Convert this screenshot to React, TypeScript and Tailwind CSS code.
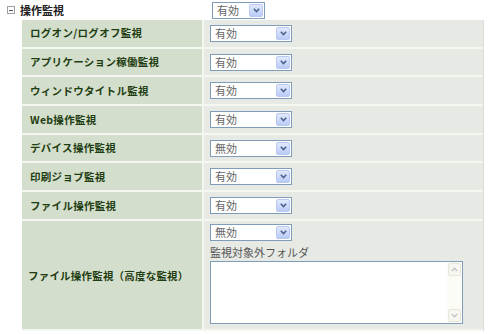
import React from "react";

const ROWS: { label: string; value: string }[] = [
  { label: "ログオン/ログオフ監視", value: "有効" },
  { label: "アプリケーション稼働監視", value: "有効" },
  { label: "ウィンドウタイトル監視", value: "有効" },
  { label: "Web操作監視", value: "有効" },
  { label: "デバイス操作監視", value: "無効" },
  { label: "印刷ジョブ監視", value: "有効" },
  { label: "ファイル操作監視", value: "有効" },
];

function Chevron() {
  return (
    <svg width="7" height="5" viewBox="0 0 7 5">
      <path d="M0.8 0.8 L3.5 3.6 L6.2 0.8" fill="none" stroke="#4a5f8c" strokeWidth="1.5" />
    </svg>
  );
}

function FakeSelect({ value, width }: { value: string; width: string }) {
  return (
    <div
      className={`flex items-center justify-between h-[17px] ${width} border border-[#7f9db9] bg-white pl-[4px] pr-[1px]`}
    >
      <span className="text-[11px] leading-none text-[#666]">{value}</span>
      <span className="flex items-center justify-center w-[14px] h-[13px] rounded-[2px] border border-[#b9c9ef] bg-gradient-to-b from-[#e1e9fd] to-[#b9cbf7]">
        <Chevron />
      </span>
    </div>
  );
}

function ScrollArrow({ up }: { up?: boolean }) {
  return (
    <span className="flex items-center justify-center w-[13px] h-[13px] rounded-[2px] border border-[#e6e6dc] bg-[#f7f7f0]">
      <svg width="7" height="5" viewBox="0 0 7 5">
        <path
          d={up ? "M0.8 4 L3.5 1.2 L6.2 4" : "M0.8 1 L3.5 3.8 L6.2 1"}
          fill="none"
          stroke="#c0c4c8"
          strokeWidth="1.3"
        />
      </svg>
    </span>
  );
}

export default function App() {
  return (
    <div className="w-[490px] h-[334px] overflow-hidden bg-white font-['Noto_Sans_CJK_JP','Noto_Sans',sans-serif]">
      {/* section header */}
      <div className="flex items-center h-[20px]">
        <span className="ml-[7px] flex items-center justify-center w-[8px] h-[8px] border border-[#9aa0a6] bg-white">
          <span className="block w-[4px] h-px bg-[#555]" />
        </span>
        <span className="ml-[5px] w-[192px] text-[11px] font-bold text-[#222] leading-none">操作監視</span>
        <FakeSelect value="有効" width="w-[53px]" />
      </div>

      {/* settings table */}
      <div className="ml-[22px] w-[462px] flex flex-col border-r border-[#dadcd8]">
        {ROWS.map((r) => (
          <div key={r.label} className="flex h-[28.7px] border-b-2 border-[#f3f7ef]">
            <div className="w-[180px] flex items-center pl-[8px] bg-[#d3dfcc] text-[10.5px] tracking-[0.3px] font-bold text-[#1f3d12]">
              {r.label}
            </div>
            <div className="w-[2px] bg-[#f3f7ef]" />
            <div className="flex-1 flex items-center pl-[6px] bg-[#e7eae4]">
              <FakeSelect value={r.value} width="w-[82px]" />
            </div>
          </div>
        ))}
        <div className="flex h-[110px] border-b-2 border-[#f3f7ef]">
          <div className="w-[180px] flex items-center pl-[6px] pt-[2px] bg-[#d3dfcc] text-[10.5px] tracking-[0.2px] font-bold text-[#1f3d12]">
            ファイル操作監視（高度な監視）
          </div>
          <div className="w-[2px] bg-[#f3f7ef]" />
          <div className="flex-1 flex flex-col pl-[6px] pt-[3px] bg-[#e7eae4]">
            <FakeSelect value="無効" width="w-[82px]" />
            <span className="mt-[6px] text-[11px] leading-none text-[#555]">監視対象外フォルダ</span>
            <div className="mt-[3px] w-[253px] h-[63px] flex justify-end border border-[#7f9db9] bg-white">
              <div className="w-[15px] flex flex-col justify-between items-center py-[1px] bg-[#fcfcf7]">
                <ScrollArrow up />
                <ScrollArrow />
              </div>
            </div>
          </div>
        </div>
      </div>
    </div>
  );
}
